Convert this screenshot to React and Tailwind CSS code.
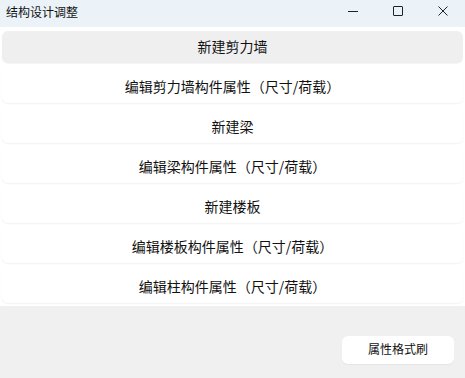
const items = [
  "新建剪力墙",
  "编辑剪力墙构件属性（尺寸/荷载）",
  "新建梁",
  "编辑梁构件属性（尺寸/荷载）",
  "新建楼板",
  "编辑楼板构件属性（尺寸/荷载）",
  "编辑柱构件属性（尺寸/荷载）",
];

const App = () => {
  return (
    <div className="w-[465px] h-[378px] flex flex-col bg-[#f0f0f0] text-[#111] font-['Microsoft_YaHei','Noto_Sans_CJK_SC',sans-serif] overflow-hidden">
      {/* title bar */}
      <div className="h-[27px] flex items-center bg-[#ebf3f9] shrink-0">
        <span className="pl-[6px] pb-[4px] text-[12px] leading-none">结构设计调整</span>
        <div className="ml-auto flex items-center h-full pb-[5px]">
          <div className="w-[45px] h-full flex items-center justify-center">
            <div className="w-[10px] h-px bg-[#222]" />
          </div>
          <div className="w-[45px] h-full flex items-center justify-center">
            <div className="w-[10px] h-[10px] border border-[#222] rounded-[1px]" />
          </div>
          <div className="w-[45px] h-full flex items-center justify-center">
            <svg width="10" height="10" viewBox="0 0 10 10" stroke="#222" strokeWidth="1">
              <path d="M0.5 0.5 L9.5 9.5 M9.5 0.5 L0.5 9.5" />
            </svg>
          </div>
        </div>
      </div>

      {/* list */}
      <div className="bg-white h-[279px] shrink-0 px-[2px] pt-[4px] flex flex-col gap-[8px]">
        {items.map((t, i) => (
          <div
            key={t}
            className={
              "h-[32px] pb-[3px] rounded-[6px] flex items-center justify-center text-[14px] leading-none " +
              (i === 0
                ? "bg-[#efefef] shadow-[0_1px_1px_rgba(0,0,0,0.04)]"
                : "bg-white shadow-[0_1px_2px_rgba(0,0,0,0.06)]")
            }
          >
            {t}
          </div>
        ))}
      </div>

      {/* footer */}
      <div className="flex-1 flex justify-end items-start pt-[30px] pr-[11px]">
        <div className="w-[112px] h-[28px] pb-[2px] bg-white rounded-[6px] shadow-[0_1px_1px_rgba(0,0,0,0.05)] flex items-center justify-center text-[12px] leading-none">
          属性格式刷
        </div>
      </div>
    </div>
  );
};

export default App;
